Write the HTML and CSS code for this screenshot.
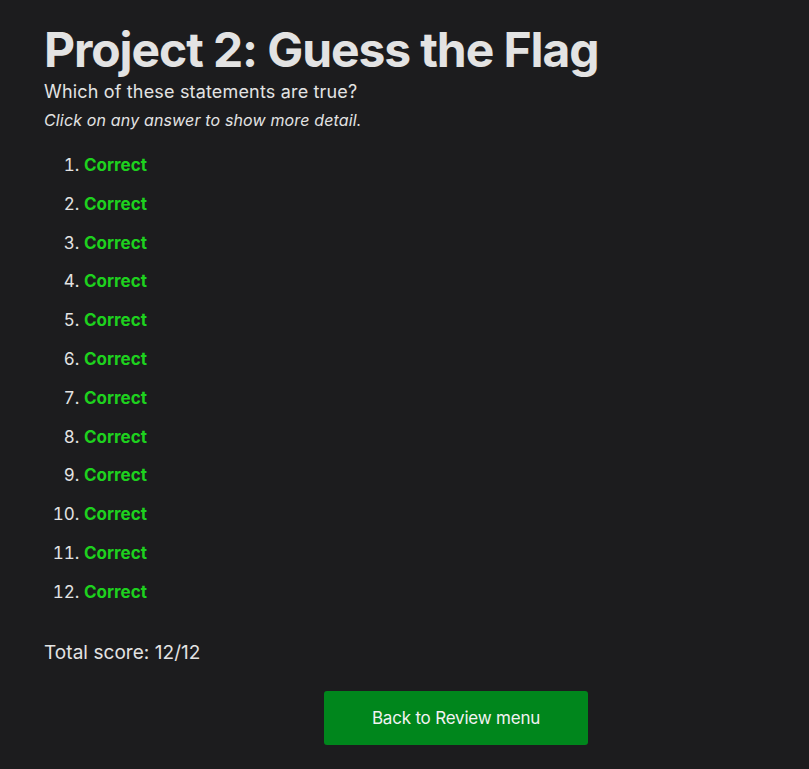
FILE: index.html
```html
<!DOCTYPE html>
<html>
<head>
<meta charset="utf-8">
<link rel="stylesheet" href="styles.css">
</head>
<body>
<main class="page">
  <h1 class="title">Project 2: Guess the Flag</h1>
  <p class="subtitle">Which of these statements are true?</p>
  <p class="hint">Click on any answer to show more detail.</p>
  <ol class="answers">
    <li><span class="correct">Correct</span></li>
    <li><span class="correct">Correct</span></li>
    <li><span class="correct">Correct</span></li>
    <li><span class="correct">Correct</span></li>
    <li><span class="correct">Correct</span></li>
    <li><span class="correct">Correct</span></li>
    <li><span class="correct">Correct</span></li>
    <li><span class="correct">Correct</span></li>
    <li><span class="correct">Correct</span></li>
    <li><span class="correct">Correct</span></li>
    <li><span class="correct">Correct</span></li>
    <li><span class="correct">Correct</span></li>
  </ol>
  <p class="total">Total score: 12/12</p>
  <button class="back">Back to Review menu</button>
</main>
</body>
</html>
```
FILE: styles.css
```css
html, body {
  margin: 0;
  padding: 0;
  background: #1c1c1e;
}
body {
  font-family: Inter, "Noto Sans", sans-serif;
  color: #e3e3e3;
}
.page {
  padding: 22px 44px 0;
}
.title {
  margin: 0;
  font-size: 48px;
  line-height: 56px;
  font-weight: 700;
  letter-spacing: -1.1px;
}
.subtitle {
  margin: 1.5px 0 0;
  font-size: 18px;
  line-height: 24px;
  letter-spacing: 0.17px;
}
.hint {
  margin: 4.5px 0 0;
  font-size: 16px;
  line-height: 24px;
  font-style: italic;
  letter-spacing: 0.15px;
}
.answers {
  margin: 14px 0 0;
  padding-left: 40px;
  font-size: 17px;
  line-height: 38.8px;
}
.correct {
  color: #1ed11e;
  font-weight: 700;
}
.total {
  margin: 29px 0 0;
  font-size: 19px;
  line-height: 24px;
  letter-spacing: 0.05px;
}
.back {
  display: block;
  margin: 26px 0 0 280px;
  width: 264px;
  height: 54px;
  border: none;
  border-radius: 3px;
  background: #00861c;
  color: #f2f2f2;
  font-family: Inter, "Noto Sans", sans-serif;
  font-size: 17px;
  letter-spacing: -0.2px;
}
```
